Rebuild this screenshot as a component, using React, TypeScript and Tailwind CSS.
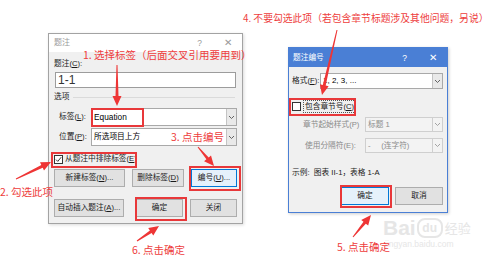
import React from "react";

const FONT = '"Liberation Sans", "Noto Sans CJK SC", sans-serif';
const CJK = '"Noto Sans CJK SC", "Liberation Sans", sans-serif';

type Pt = { x1: number; y1: number; x2: number; y2: number };

const arrows: Pt[] = [
  { x1: 117, y1: 65, x2: 117, y2: 106 },
  { x1: 16, y1: 179, x2: 51, y2: 162 },
  { x1: 198, y1: 147, x2: 214, y2: 166 },
  { x1: 337, y1: 30, x2: 322, y2: 95 },
  { x1: 353, y1: 237, x2: 371, y2: 215 },
  { x1: 137, y1: 241, x2: 159, y2: 226 },
];

function arrowPoints({ x1, y1, x2, y2 }: Pt) {
  const dx = x2 - x1;
  const dy = y2 - y1;
  const len = Math.hypot(dx, dy);
  const ux = dx / len;
  const uy = dy / len;
  const nx = -uy;
  const ny = ux;
  const head = 10;
  const hx = x2 - ux * head;
  const hy = y2 - uy * head;
  const p = (x: number, y: number) => `${x.toFixed(1)},${y.toFixed(1)}`;
  return [
    p(x1 + nx * 0.5, y1 + ny * 0.5),
    p(hx + nx * 1.5, hy + ny * 1.5),
    p(hx + nx * 4.5, hy + ny * 4.5),
    p(x2, y2),
    p(hx - nx * 4.5, hy - ny * 4.5),
    p(hx - nx * 1.5, hy - ny * 1.5),
    p(x1 - nx * 0.5, y1 - ny * 0.5),
  ].join(" ");
}

function Chevron({ color = "#555" }: { color?: string }) {
  return (
    <svg width="7" height="5" viewBox="0 0 7 5">
      <polyline points="1,1 3.5,3.5 6,1" fill="none" stroke={color} strokeWidth="0.9" />
    </svg>
  );
}

function Combo({ text, disabled }: { text: React.ReactNode; disabled?: boolean }) {
  return (
    <div
      className={
        disabled
          ? "flex h-full flex-1 border border-[#cfcfcf] bg-[#f3f3f3] text-[#8c8c8c]"
          : "flex h-full flex-1 border border-[#a9a9a9] bg-white text-black"
      }
    >
      <div className="flex flex-1 items-center px-[2px] whitespace-pre">{text}</div>
      <div
        className={
          disabled
            ? "flex w-[10px] items-center justify-center border-l border-[#cfcfcf] bg-[#f3f3f3]"
            : "flex w-[10px] items-center justify-center border-l border-[#c4c4c4] bg-[#e9e9e9]"
        }
      >
        <Chevron color={disabled ? "#9a9a9a" : "#555"} />
      </div>
    </div>
  );
}

function Btn({ children, w, focus }: { children: React.ReactNode; w: string; focus?: boolean }) {
  return (
    <div
      className={
        focus
          ? `${w} flex h-[18px] items-center justify-center border border-[#0078d7] bg-[#e5f1fb]`
          : `${w} flex h-[18px] items-center justify-center border border-[#adadad] bg-[#e1e1e1]`
      }
    >
      {children}
    </div>
  );
}

function RedBox({ c }: { c: string }) {
  return <div className={`absolute border-2 border-[#e8383a] ${c}`} />;
}

function Note({ c, children }: { c: string; children: React.ReactNode }) {
  return (
    <div
      className={`absolute whitespace-nowrap leading-[14px] text-[#ee3d3d] ${c}`}
      style={{ fontFamily: CJK }}
    >
      {children}
    </div>
  );
}

export default function App() {
  return (
    <div className="relative h-[261px] w-[500px] overflow-hidden bg-white" style={{ fontFamily: FONT }}>
      {/* left dialog: 题注 */}
      <div className="absolute left-[48px] top-[33px] flex h-[191px] w-[195px] flex-col border border-[#a3a3a3] bg-[#f0f0f0] text-[7.7px] leading-[12px] text-[#1a1a1a] shadow-[1px_1px_3px_rgba(0,0,0,0.15)]">
        <div className="flex h-[18px] items-center bg-white pl-[5px] pr-[10px] text-[8px] text-[#9a9a9a]">
          <span>题注</span>
          <span className="ml-auto mr-[22px] text-[8.5px]">?</span>
          <span className="text-[10px]">✕</span>
        </div>
        <div className="flex flex-col px-[5px]">
          <div className="mt-[6px] h-[12px]">题注(<u>C</u>):</div>
          <div className="ml-[1px] mt-[2px] flex h-[16px] w-[181px] items-center border border-[#9c9c9c] bg-white px-[2px] text-[12px] text-[#333]">
            1-1
          </div>
          <div className="mt-[3px] flex h-[12px] items-center">
            <span>选项</span>
            <div className="ml-[4px] mr-[2px] flex-1 border-t border-[#dadada]" />
          </div>
          <div className="mt-[5px] flex h-[18px] items-center">
            <div className="w-[37px] pl-[5px]">标签(<u>L</u>):</div>
            <Combo text={<span className="text-[8.3px]">Equation</span>} />
          </div>
          <div className="mt-[2px] flex h-[18px] items-center">
            <div className="w-[37px] pl-[5px]">位置(<u>P</u>):</div>
            <Combo text="所选项目上方" />
          </div>
          <div className="mt-[6px] flex h-[14px] items-center">
            <div className="flex h-[9px] w-[9px] items-center justify-center border border-[#333] bg-white">
              <svg width="7" height="7" viewBox="0 0 7 7">
                <polyline points="1,3.6 2.8,5.4 6.2,1.2" fill="none" stroke="#222" strokeWidth="0.9" />
              </svg>
            </div>
            <span className="ml-[2px]">从题注中排除标签(<u>E</u>)</span>
          </div>
          <div className="mt-[3px] flex justify-between">
            <Btn w="w-[71px]">新建标签(<u>N</u>)...</Btn>
            <Btn w="w-[52px]">删除标签(<u>D</u>)</Btn>
            <Btn w="w-[46px]" focus>编号(<u>U</u>)...</Btn>
          </div>
          <div className="mt-[12px] flex">
            <Btn w="w-[71px]">自动插入题注(<u>A</u>)...</Btn>
            <div className="ml-[12px]">
              <Btn w="w-[47px]">确定</Btn>
            </div>
            <div className="ml-[7px]">
              <Btn w="w-[47px]">关闭</Btn>
            </div>
          </div>
        </div>
      </div>

      {/* right dialog: 题注编号 */}
      <div className="absolute left-[288px] top-[47px] flex h-[166px] w-[160px] flex-col border border-[#4a7fd5] bg-[#f0f0f0] text-[7.7px] leading-[12px] text-[#1a1a1a] shadow-[1px_1px_3px_rgba(0,0,0,0.2)]">
        <div className="flex h-[19px] items-center bg-[#4a7fd5] pl-[4px] pr-[10px] text-[7.7px] text-white">
          <span>题注编号</span>
          <span className="ml-auto mr-[22px] text-[8.5px]">?</span>
          <span className="text-[10px]">✕</span>
        </div>
        <div className="flex flex-col pl-[3px] pr-[4px]">
          <div className="mt-[6px] flex h-[16px] items-center">
            <div className="w-[28px]">格式(<u>F</u>):</div>
            <Combo text={<span className="text-[8px]">1, 2, 3, ...</span>} />
          </div>
          <div className="mt-[11px] flex h-[13px] items-center">
            <div className="h-[9px] w-[9px] border border-[#333] bg-white" />
            <span className="ml-[2px] border border-dotted border-[#555] px-[1px] leading-[11px]">
              包含章节号(<u>C</u>)
            </span>
          </div>
          <div className="mt-[4px] flex h-[15px] items-center text-[#8a8a8a]">
            <div className="w-[73px] pl-[11px]">章节起始样式(P)</div>
            <Combo text="标题 1" disabled />
          </div>
          <div className="mt-[6px] flex h-[15px] items-center text-[#8a8a8a]">
            <div className="w-[73px] pl-[13px]">使用分隔符(E):</div>
            <Combo text={"-     (连字符)"} disabled />
          </div>
          <div className="mt-[14px] h-[12px]">示例:&nbsp; 图表 II-1，表格 1-A</div>
          <div className="mt-[8px] flex justify-end gap-[6px]">
            <Btn w="w-[48px]" focus>确定</Btn>
            <Btn w="w-[48px]">取消</Btn>
          </div>
        </div>
      </div>

      {/* baidu watermark */}
      <div className="absolute left-[383px] top-[216px] flex items-center text-[#e6e6e6]">
        <span className="text-[21px] font-bold leading-[24px]" style={{ fontFamily: '"Liberation Sans", sans-serif' }}>
          Bai
        </span>
        <span className="ml-[1px] flex h-[20px] w-[26px] items-center justify-center rounded-[8px] border-2 border-[#e6e6e6] text-[12px] font-bold leading-[14px]">
          du
        </span>
        <span className="ml-[2px] text-[13px] leading-[16px]" style={{ fontFamily: CJK }}>
          经验
        </span>
      </div>
      <div className="absolute left-[385px] top-[239px] text-[8.5px] leading-[10px] text-[#e6e6e6]">
        jingyan.baidu.com
      </div>

      {/* red boxes */}
      <RedBox c="left-[91px] top-[108px] h-[19px] w-[53px]" />
      <RedBox c="left-[51px] top-[152px] h-[16px] w-[86px]" />
      <RedBox c="left-[189px] top-[166px] h-[25px] w-[52px]" />
      <RedBox c="left-[135px] top-[197px] h-[24px] w-[52px]" />
      <RedBox c="left-[289px] top-[98px] h-[18px] w-[67px]" />
      <RedBox c="left-[340px] top-[185px] h-[23px] w-[52px]" />

      {/* notes */}
      <Note c="left-[83px] top-[48px] text-[10.5px]">1. 选择标签（后面交叉引用要用到）</Note>
      <Note c="left-[0px] top-[185px] text-[10.5px]">2. 勾选此项</Note>
      <Note c="left-[171px] top-[130px] text-[10.5px]">3. 点击编号</Note>
      <Note c="left-[243px] top-[11px] text-[9.8px]">4. 不要勾选此项（若包含章节标题涉及其他问题，另说）</Note>
      <Note c="left-[337px] top-[240px] text-[10.5px]">5. 点击确定</Note>
      <Note c="left-[132px] top-[243px] text-[10.5px]">6. 点击确定</Note>

      <svg className="pointer-events-none absolute inset-0" width="500" height="261">
        {arrows.map((a, i) => (
          <polygon key={i} points={arrowPoints(a)} fill="#ee3535" />
        ))}
      </svg>
    </div>
  );
}
